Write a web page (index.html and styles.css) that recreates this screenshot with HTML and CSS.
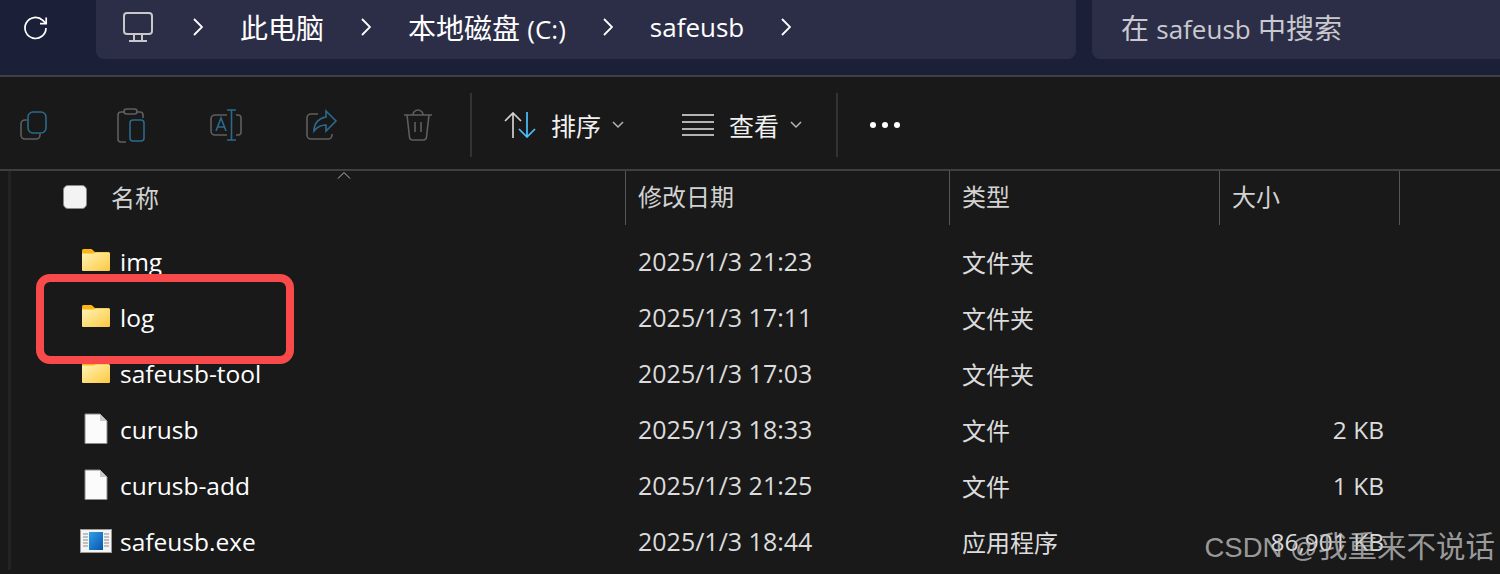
FILE: index.html
```html
<!DOCTYPE html>
<html lang="zh">
<head>
    <meta charset="UTF-8">
    <title>safeusb</title>
    <link rel="stylesheet" href="styles.css">
</head>
<body>
    <!-- 地址栏 -->
    <header class="addressbar">
        <svg class="refresh" width="28" height="28" viewBox="0 0 28 28" fill="none" stroke="#fff" stroke-width="1.7">
            <path d="M24 14a10.5 10.5 0 1 1-3.2-7.6L24 9.4"/>
            <path d="M24.2 3.4v6.2h-6.2"/>
        </svg>
        <nav class="crumbs">
            <svg class="monitor" width="30" height="30" viewBox="0 0 30 30" fill="none" stroke="#c8c8c8" stroke-width="2">
                <rect x="1" y="1" width="28" height="21" rx="3"/>
                <path d="M11 23v5M19 23v5M6 29h18"/>
            </svg>
            <svg class="chev" width="10" height="18" viewBox="0 0 10 18" fill="none" stroke="#fff" stroke-width="1.8"><path d="M1 1l8 8-8 8"/></svg>
            <span class="crumb">此电脑</span>
            <svg class="chev" width="10" height="18" viewBox="0 0 10 18" fill="none" stroke="#fff" stroke-width="1.8"><path d="M1 1l8 8-8 8"/></svg>
            <span class="crumb">本地磁盘 <span class="lat">(C:)</span></span>
            <svg class="chev" width="10" height="18" viewBox="0 0 10 18" fill="none" stroke="#fff" stroke-width="1.8"><path d="M1 1l8 8-8 8"/></svg>
            <span class="crumb lat">safeusb</span>
            <svg class="chev" width="10" height="18" viewBox="0 0 10 18" fill="none" stroke="#fff" stroke-width="1.8"><path d="M1 1l8 8-8 8"/></svg>
        </nav>
        <div class="search">在 <span class="lat">safeusb</span> 中搜索</div>
    </header>

    <!-- 工具栏 -->
    <section class="toolbar">
        <div class="tools">
            <svg width="32" height="32" viewBox="0 0 32 32" fill="none" stroke-width="1.6">
                <path d="M9 11H7a4 4 0 0 0-4 4v11a4 4 0 0 0 4 4h11a4 4 0 0 0 4-4v-1" stroke="#5f5f5f"/>
                <rect x="10" y="3" width="18" height="21" rx="5" stroke="#2b6a8c"/>
            </svg>
            <svg width="32" height="36" viewBox="0 0 32 36" fill="none" stroke-width="1.6">
                <path d="M11 5H7a3 3 0 0 0-3 3v24a3 3 0 0 0 3 3h5M23 5h3a3 3 0 0 1 3 3v3" stroke="#5f5f5f"/>
                <rect x="10" y="2" width="13" height="5" rx="2.5" stroke="#5f5f5f"/>
                <rect x="16" y="13" width="14" height="21" rx="3" stroke="#2b6a8c"/>
            </svg>
            <svg width="32" height="32" viewBox="0 0 32 32" fill="none" stroke-width="1.6">
                <path d="M17 6H5a4 4 0 0 0-4 4v12a4 4 0 0 0 4 4h12M26 6h2a3 3 0 0 1 3 3v14a3 3 0 0 1-3 3h-2" stroke="#5f5f5f"/>
                <path d="M17 1h9M21.500 1v30M17 31h9M6 22l5-13 5 13M7.800 18h6.400" stroke="#2b6a8c"/>
            </svg>
            <svg width="32" height="32" viewBox="0 0 32 32" fill="none" stroke-width="1.6">
                <path d="M12 5H5a4 4 0 0 0-4 4v17a4 4 0 0 0 4 4h17a4 4 0 0 0 4-4v-1" stroke="#5f5f5f"/>
                <path d="M20 2l10 10-10 10v-6c-6 0-9 2-12 6 0-8 5-13 12-14z" stroke="#2b6a8c"/>
            </svg>
            <svg width="32" height="32" viewBox="0 0 32 32" fill="none" stroke="#5f5f5f" stroke-width="1.6">
                <path d="M2 6h28M5 6l2.500 22a3 3 0 0 0 3 3h11a3 3 0 0 0 3-3L27 6M11 6a5 5 0 0 1 10 0M13 13v10M19 13v10"/>
            </svg>
        </div>
        <span class="sep sep-first"></span>
        <div class="menu menu-sort">
            <svg width="32" height="26" viewBox="0 0 32 26" fill="none" stroke-width="1.7">
                <path d="M9 26V1M1 9l8-8 8 8" stroke="#d0d0d0"/>
                <path d="M23 0v25M15 17l8 8 8-8" stroke="#4cc2ff"/>
            </svg>
            <span class="menu-label">排序</span>
            <svg width="12" height="8" viewBox="0 0 12 8" fill="none" stroke="#b5b5b5" stroke-width="1.500"><path d="M1 1l5 5 5-5"/></svg>
        </div>
        <div class="menu menu-view">
            <svg width="32" height="22" viewBox="0 0 32 22" fill="none" stroke="#e6e6e6" stroke-width="1.500">
                <path d="M0 1h32M0 8h32M0 15h32M0 21h32"/>
            </svg>
            <span class="menu-label">查看</span>
            <svg width="12" height="8" viewBox="0 0 12 8" fill="none" stroke="#b5b5b5" stroke-width="1.500"><path d="M1 1l5 5 5-5"/></svg>
        </div>
        <span class="sep sep-second"></span>
        <div class="dots"><i></i><i></i><i></i></div>
    </section>

    <!-- 文件列表 -->
    <main class="list">
        <div class="row head">
            <div class="cell name">
                <span class="check"></span>
                <span>名称</span>
                <svg class="sort-caret" width="14" height="7" viewBox="0 0 14 7" fill="none" stroke="#bdbdbd"><path d="M1 6.500l6-6 6 6"/></svg>
            </div>
            <div class="cell">修改日期</div>
            <div class="cell">类型</div>
            <div class="cell">大小</div>
        </div>

        <div class="row">
            <div class="cell name"><svg class="ico ico-folder" width="32" height="24" viewBox="0 0 32 24"><use href="#folder"/></svg><span>img</span></div>
            <div class="cell">2025/1/3 21:23</div>
            <div class="cell type">文件夹</div>
            <div class="cell size"></div>
        </div>
        <div class="row">
            <div class="cell name"><svg class="ico ico-folder" width="32" height="24" viewBox="0 0 32 24"><use href="#folder"/></svg><span>log</span></div>
            <div class="cell">2025/1/3 17:11</div>
            <div class="cell type">文件夹</div>
            <div class="cell size"></div>
        </div>
        <div class="row">
            <div class="cell name"><svg class="ico ico-folder" width="32" height="24" viewBox="0 0 32 24"><use href="#folder"/></svg><span>safeusb-tool</span></div>
            <div class="cell">2025/1/3 17:03</div>
            <div class="cell type">文件夹</div>
            <div class="cell size"></div>
        </div>
        <div class="row">
            <div class="cell name"><svg class="ico" width="32" height="32" viewBox="0 0 32 32"><use href="#file"/></svg><span>curusb</span></div>
            <div class="cell">2025/1/3 18:33</div>
            <div class="cell type">文件</div>
            <div class="cell size">2 KB</div>
        </div>
        <div class="row">
            <div class="cell name"><svg class="ico" width="32" height="32" viewBox="0 0 32 32"><use href="#file"/></svg><span>curusb-add</span></div>
            <div class="cell">2025/1/3 21:25</div>
            <div class="cell type">文件</div>
            <div class="cell size">1 KB</div>
        </div>
        <div class="row">
            <div class="cell name">
                <svg class="ico" width="32" height="24" viewBox="0 0 32 24">
                    <rect x="0.500" y="0.500" width="31" height="23" fill="#f4f4f4" stroke="#9a9a9a"/>
                    <path d="M3 5h5M3 8h5M3 11h5M3 14h5M3 17h5M24 5h5M24 8h5M24 11h5M24 14h5M24 17h5" stroke="#8a8a8a"/>
                    <rect x="9" y="3" width="14" height="18" fill="url(#exe-blue)"/>
                </svg>
                <span>safeusb.exe</span>
            </div>
            <div class="cell">2025/1/3 18:44</div>
            <div class="cell type">应用程序</div>
            <div class="cell size">86,901 KB</div>
        </div>
    </main>

    <!-- 红框标注 + 水印 -->
    <div class="mark"></div>
    <div class="watermark"><span class="wm-lat">CSDN @</span>我重来不说话</div>

    <svg width="0" height="0" class="defs">
        <defs>
            <linearGradient id="folder-body" x1="0" y1="0" x2="1" y2="1">
                <stop offset="0" stop-color="#fff3b8"/>
                <stop offset="1" stop-color="#fcc93f"/>
            </linearGradient>
            <linearGradient id="exe-blue" x1="0" y1="0" x2="1" y2="1">
                <stop offset="0" stop-color="#2fa0e8"/>
                <stop offset="1" stop-color="#0a55ad"/>
            </linearGradient>
            <symbol id="folder" viewBox="0 0 32 24">
                <path d="M2 2.500Q2 1 3.500 1h8L15 4h14v6H2z" fill="#fbb614"/>
                <path d="M2 5.500h12L16 4.500h13.500Q30 4.500 30 5.500V22q0 1-1 1H3q-1 0-1-1z" fill="url(#folder-body)"/>
            </symbol>
            <symbol id="file" viewBox="0 0 32 32">
                <path d="M5 1h15l7 7v22.500H5z" fill="#fbfbfb" stroke="#8a8a8a"/>
                <path d="M20 1v7h7z" fill="#c9c9c9"/>
            </symbol>
        </defs>
    </svg>
</body>
</html>
```

FILE: styles.css
```css
* {
    box-sizing: border-box;
}

body {
    margin: 0;
    height: 574px;
    overflow: hidden;
    position: relative;
    background: #191919;
    color: #fff;
    font-family: "Open Sans", "Noto Sans CJK SC", sans-serif;
    font-size: 25px;
}

/* 地址栏 */
.addressbar {
    height: 77px;
    display: flex;
    align-items: flex-start;
    background: #1c1f38;
    border-bottom: 2px solid #3f3f3f;
    font-size: 28px;
}

.lat {
    font-size: 26px;
}

.refresh {
    margin: 14px 46px 0 22px;
    flex: none;
}

.crumbs {
    width: 980px;
    height: 59px;
    display: flex;
    align-items: center;
    gap: 37px;
    padding: 0 0 5px 27px;
    background: #2c2e47;
    border-radius: 0 0 8px 8px;
}

.monitor,
.chev {
    flex: none;
}

.monitor {
    margin-right: 3px;
}

.search {
    flex: 1;
    height: 59px;
    margin-left: 16px;
    padding-left: 29px;
    line-height: 56px;
    color: #c9c9cf;
    background: #2c2e47;
    border-radius: 0 0 0 8px;
}

/* 工具栏 */
.toolbar {
    height: 94px;
    display: flex;
    align-items: center;
    padding: 4px 0 0 18px;
    border-bottom: 2px solid #3f3f3f;
}

.tools {
    display: flex;
    align-items: center;
    gap: 64px;
}

.sep {
    width: 2px;
    height: 64px;
    background: #333;
}

.sep-first {
    margin-left: 36px;
}

.sep-second {
    margin-left: 34px;
}

.menu {
    display: flex;
    align-items: center;
}

.menu-sort {
    margin-left: 32px;
}

.menu-view {
    margin-left: 58px;
}

.menu-label {
    margin: 0 11px 0 15px;
    color: #f0f0f0;
}

.dots {
    display: flex;
    gap: 6px;
    margin-left: 32px;
}

.dots i {
    width: 6px;
    height: 6px;
    border-radius: 50%;
    background: #fff;
}

/* 文件列表 */
.list {
    background: linear-gradient(to right, #191919 8px, #232323 8px, #232323 11px, #191919 11px);
}

.row {
    height: 56px;
    display: grid;
    grid-template-columns: 626px 324px 270px 180px;
    align-items: center;
    color: #dcdcdc;
}

.cell {
    padding: 0 0 2px 12px;
}

.type {
    font-size: 24px;
}

.name {
    display: flex;
    align-items: center;
    gap: 8px;
    padding-left: 80px;
    color: #fff;
    font-size: 24.5px;
}

.size {
    padding: 0 16px 2px 0;
    text-align: right;
    font-size: 24.5px;
}

.head {
    height: 54px;
    margin-bottom: 9px;
    align-items: stretch;
    color: #d2d2d2;
    font-size: 24px;
}

.head .cell {
    padding-bottom: 0;
    line-height: 52px;
    border-right: 1px solid #555;
}

.head .name {
    position: relative;
    gap: 24px;
    padding-left: 63px;
    color: #d2d2d2;
    font-size: 24px;
}

.check {
    width: 24px;
    height: 24px;
    margin-bottom: 2px;
    background: #f3f3f3;
    border: 1px solid #8a8a8a;
    border-radius: 5px;
}

.sort-caret {
    position: absolute;
    left: 337px;
    top: 1px;
}

.ico {
    flex: none;
}

.ico-folder {
    margin-bottom: 2px;
}

/* 红框 */
.mark {
    position: absolute;
    left: 36px;
    top: 274px;
    width: 258px;
    height: 90px;
    border: 8px solid #f84a4a;
    border-radius: 14px;
}

.watermark {
    position: absolute;
    right: 5px;
    top: 528px;
    font-size: 29.5px;
    line-height: 38px;
    color: rgba(190, 190, 190, 0.8);
    font-family: "Liberation Sans", "Noto Sans CJK SC", sans-serif;
}

.wm-lat {
    font-size: 27.5px;
}

.defs {
    position: absolute;
}
```
